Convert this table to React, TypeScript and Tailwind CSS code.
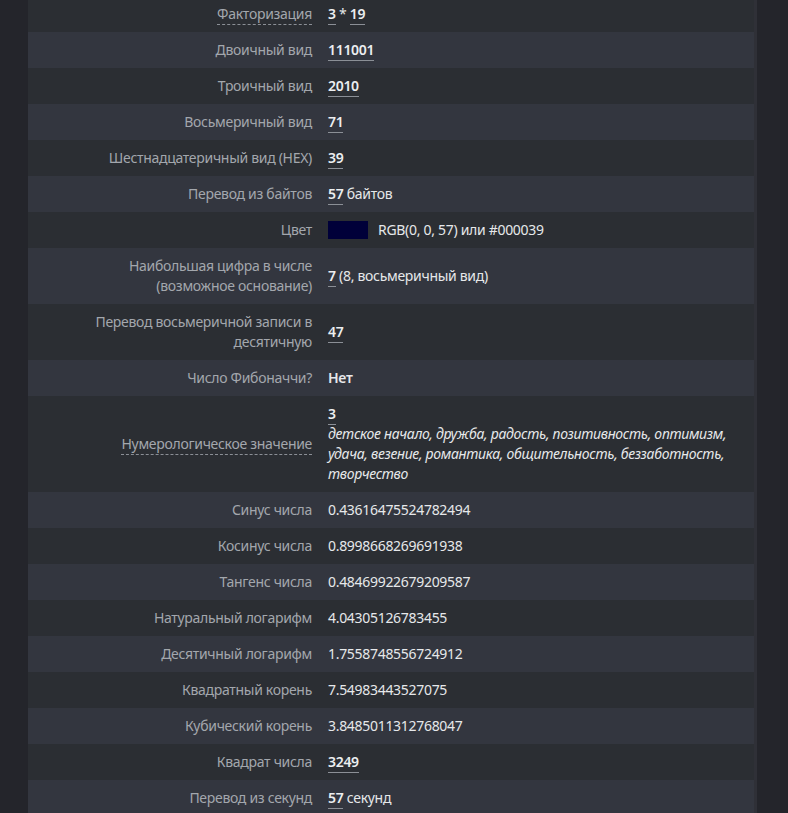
import React from 'react';

type Row = {
  label: React.ReactNode;
  value: React.ReactNode;
};

function Num({ children }: { children: React.ReactNode }) {
  return (
    <span className="font-semibold text-[#eceef0] border-b border-[#8b8f96] pb-[1px]">{children}</span>
  );
}

function Dashed({ children }: { children: React.ReactNode }) {
  return <span className="border-b border-dashed border-[#8b8f96] pb-[1px]">{children}</span>;
}

const rows: Row[] = [
  { label: <Dashed>Факторизация</Dashed>, value: <><Num>3</Num> * <Num>19</Num></> },
  { label: 'Двоичный вид', value: <Num>111001</Num> },
  { label: 'Троичный вид', value: <Num>2010</Num> },
  { label: 'Восьмеричный вид', value: <Num>71</Num> },
  { label: 'Шестнадцатеричный вид (HEX)', value: <Num>39</Num> },
  { label: 'Перевод из байтов', value: <><Num>57</Num> байтов</> },
  {
    label: 'Цвет',
    value: (
      <span className="flex items-center gap-[10px]">
        <span className="inline-block w-[40px] h-[18px] bg-[#000039]" />
        RGB(0, 0, 57) или #000039
      </span>
    ),
  },
  {
    label: <>Наибольшая цифра в числе<br />(возможное основание)</>,
    value: <><Num>7</Num> (8, восьмеричный вид)</>,
  },
  {
    label: <>Перевод восьмеричной записи в<br />десятичную</>,
    value: <Num>47</Num>,
  },
  { label: 'Число Фибоначчи?', value: <span className="font-semibold">Нет</span> },
  {
    label: <Dashed>Нумерологическое значение</Dashed>,
    value: (
      <div>
        <Num>3</Num>
        <div className="italic">
          детское начало, дружба, радость, позитивность, оптимизм, удача, везение, романтика,
          общительность, беззаботность, творчество
        </div>
      </div>
    ),
  },
  { label: 'Синус числа', value: '0.43616475524782494' },
  { label: 'Косинус числа', value: '0.8998668269691938' },
  { label: 'Тангенс числа', value: '0.48469922679209587' },
  { label: 'Натуральный логарифм', value: '4.04305126783455' },
  { label: 'Десятичный логарифм', value: '1.7558748556724912' },
  { label: 'Квадратный корень', value: '7.54983443527075' },
  { label: 'Кубический корень', value: '3.8485011312768047' },
  { label: 'Квадрат числа', value: <Num>3249</Num> },
  { label: 'Перевод из секунд', value: <><Num>57</Num> секунд</> },
];

export default function App() {
  return (
    <div
      className="w-[788px] h-[813px] overflow-hidden bg-[#24252b] flex text-[14px] leading-[20px] tracking-[-0.3px]"
      style={{ fontFamily: '"Noto Sans", "Open Sans", sans-serif' }}
    >
      <div className="w-[28px] shrink-0" />
      <div className="w-[729px] shrink-0 -mt-1 border-r-[3px] border-[#2f3037]">
        {rows.map((r, i) => (
          <div
            key={i}
            className={`flex items-center py-2 ${i % 2 === 0 ? 'bg-[#2b2e33]' : 'bg-[#33363f]'}`}
          >
            <div className="w-[284px] shrink-0 text-right text-[#a3a7ad]">{r.label}</div>
            <div className="flex-1 pl-4 pr-2 text-[#e6e8ea]">{r.value}</div>
          </div>
        ))}
      </div>
    </div>
  );
}
